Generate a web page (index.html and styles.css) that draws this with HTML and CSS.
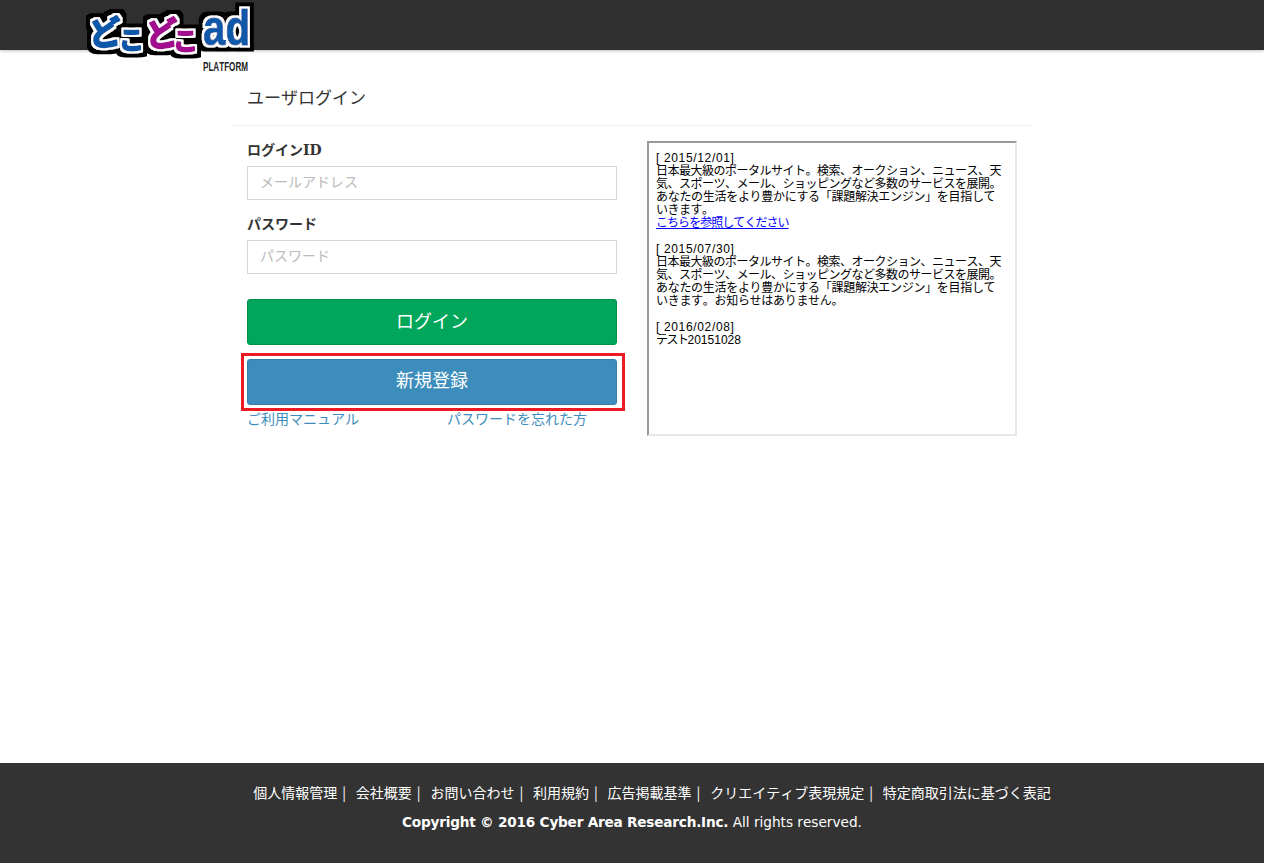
FILE: index.html
```html
<!DOCTYPE html>
<html lang="ja">
<head>
<meta charset="utf-8">
<title>ユーザログイン</title>
<link rel="stylesheet" href="styles.css">
</head>
<body>
<header class="topbar">
  <svg class="logo" width="172" height="74" viewBox="0 0 172 74">
    <defs>
      <filter id="logo-outline" x="-10%" y="-25%" width="120%" height="150%">
        <feMorphology in="SourceAlpha" operator="dilate" radius="2" result="inner"/>
        <feFlood flood-color="#fff"/>
        <feComposite in2="inner" operator="in" result="white"/>
        <feMorphology in="SourceAlpha" operator="dilate" radius="5.5" result="outer"/>
        <feFlood flood-color="#000"/>
        <feComposite in2="outer" operator="in" result="black"/>
        <feMerge>
          <feMergeNode in="black"/>
          <feMergeNode in="white"/>
          <feMergeNode in="SourceGraphic"/>
        </feMerge>
      </filter>
    </defs>
    <g class="logo-mark">
      <text class="kana big blue" x="3" y="45" transform="rotate(-6 20 30)">ど</text>
      <text class="kana small blue" x="34" y="49">こ</text>
      <text class="kana big purple" x="60" y="46" transform="rotate(-6 77 30)">ど</text>
      <text class="kana small purple" x="88" y="50">こ</text>
      <text class="logo-ad" x="118" y="45" textLength="47" lengthAdjust="spacingAndGlyphs">ad</text>
    </g>
    <text class="logo-platform" x="118" y="71" textLength="45" lengthAdjust="spacingAndGlyphs">PLATFORM</text>
  </svg>
</header>
<main class="page">
  <h1 class="title">ユーザログイン</h1>
  <div class="columns">
    <form class="login">
      <label class="field-label">ログインID</label>
      <input class="field" type="text" placeholder="メールアドレス">
      <label class="field-label second">パスワード</label>
      <input class="field" type="password" placeholder="パスワード">
      <button class="btn btn-green" type="button">ログイン</button>
      <div class="register">
        <button class="btn btn-blue" type="button">新規登録</button>
        <span class="highlight"></span>
      </div>
      <div class="links">
        <a href="#" class="link link-manual">ご利用マニュアル</a>
        <a href="#" class="link">パスワードを忘れた方</a>
      </div>
    </form>
    <div class="notices">
      <span class="latin">[ 2015/12/01]</span><br>
      日本最大級のポータルサイト。検索、オークション、ニュース、天<br>
      気、スポーツ、メール、ショッピングなど多数のサービスを展開。<br>
      <span class="wide">あなたの生活をより豊かにする「課題解決エンジン」を目指して</span><br>
      いきます。<br>
      <a href="#" class="notice-link">こちらを参照してください</a><br>
      <br>
      <span class="latin">[ 2015/07/30]</span><br>
      日本最大級のポータルサイト。検索、オークション、ニュース、天<br>
      気、スポーツ、メール、ショッピングなど多数のサービスを展開。<br>
      <span class="wide">あなたの生活をより豊かにする「課題解決エンジン」を目指して</span><br>
      <span class="wide">いきます。お知らせはありません。</span><br>
      <br>
      <span class="latin">[ 2016/02/08]</span><br>
      <span class="narrow">テスト</span><span class="digits">20151028</span>
    </div>
  </div>
</main>
<footer class="footer">
  <nav class="footer-nav">
    <a href="#">個人情報管理</a><span class="sep">|</span>
    <a href="#">会社概要</a><span class="sep">|</span>
    <a href="#">お問い合わせ</a><span class="sep">|</span>
    <a href="#">利用規約</a><span class="sep">|</span>
    <a href="#">広告掲載基準</a><span class="sep">|</span>
    <a href="#">クリエイティブ表現規定</a><span class="sep">|</span>
    <a href="#">特定商取引法に基づく表記</a>
  </nav>
  <p class="copyright"><strong>Copyright © 2016 Cyber Area Research.Inc.</strong> All rights reserved.</p>
</footer>
</body>
</html>
```
FILE: styles.css
```css
* { box-sizing: border-box; }
html, body { height: 100%; }
body {
  margin: 0;
  display: flex;
  flex-direction: column;
  min-height: 863px;
  background: #fff;
  color: #333;
  font-family: "Noto Sans CJK JP", "Liberation Sans", sans-serif;
  font-size: 14px;
  font-kerning: none;
}
.topbar {
  height: 50px;
  flex: none;
  background: #2f2f2f;
  box-shadow: 0 1px 3px rgba(0,0,0,.25);
  padding-left: 85px;
}
.logo { display: block; overflow: visible; }
.logo-mark { filter: url(#logo-outline); }
.kana {
  font-family: "Noto Sans CJK JP", sans-serif;
  font-weight: 700;
  stroke-width: 2px;
  stroke-linejoin: round;
}
.big { font-size: 33px; }
.small { font-size: 25px; }
.blue { fill: #0b58a8; stroke: #0b58a8; }
.purple { fill: #a3118f; stroke: #a3118f; }
.logo-ad {
  font-family: "Liberation Sans", sans-serif;
  font-size: 50px;
  font-weight: 700;
  fill: #0b58a8;
  stroke: #0b58a8;
  stroke-width: 1px;
}
.logo-platform {
  font-family: "Liberation Sans", sans-serif;
  font-size: 13px;
  font-weight: 700;
  fill: #222;
}
.page {
  flex: 1;
  width: 800px;
  margin-left: 232px;
}
.title {
  margin: 0;
  height: 76px;
  padding: 35px 0 0 15px;
  border-bottom: 1px solid #f2f2f2;
  font-size: 17px;
  font-weight: 400;
  line-height: 24px;
  color: #333;
}
.columns {
  display: flex;
  padding: 15px 0 0 15px;
  gap: 30px;
}
.login { width: 370px; display: flex; flex-direction: column; }
.field-label {
  font-family: "DejaVu Serif", "Noto Sans CJK JP", serif;
  font-size: 14px;
  font-weight: 700;
  line-height: 18px;
  height: 25px;
  color: #333;
}
.field-label.second { margin-top: 15px; }
.field {
  height: 34px;
  width: 100%;
  border: 1px solid #d2d6de;
  padding: 0 12px 5px 12px;
  font: inherit;
  font-size: 14px;
  background: #fff;
  outline: none;
}
.field::placeholder { color: #bbb; opacity: 1; }
.btn {
  display: block;
  width: 100%;
  height: 46px;
  border-radius: 3px;
  color: #fff;
  font: inherit;
  font-size: 18px;
  padding: 0 0 5px;
}
.btn-green { margin-top: 25px; background: #00a65a; border: 1px solid #008d4c; }
.register { position: relative; margin-top: 14px; }
.btn-blue { background: #3c8dbc; border: 1px solid #367fa9; padding-bottom: 7px; }
.highlight {
  position: absolute;
  left: -6px;
  top: -6px;
  width: 384px;
  height: 58px;
  border: 3px solid #ed1c24;
  pointer-events: none;
}
.links { display: flex; margin-top: 3px; }
.link { color: #3c8dbc; text-decoration: none; font-size: 14px; line-height: 20px; }
.link-manual { width: 200px; }
.notices {
  width: 370px;
  height: 295px;
  padding: 9px 5px 0 7px;
  border-style: solid;
  border-width: 2px;
  border-color: #9a9a9a #e8e8e8 #e8e8e8 #9a9a9a;
  font-family: "Liberation Sans", "Noto Sans CJK JP", sans-serif;
  font-size: 12px;
  line-height: 13px;
  letter-spacing: -0.5px;
  color: #000;
  overflow: hidden;
}
.latin { letter-spacing: 0.65px; }
.digits { letter-spacing: 0; }
.wide { letter-spacing: -0.3px; }
.narrow { letter-spacing: -1.5px; }
.notice-link { color: #00f; text-decoration: underline; letter-spacing: -0.95px; }
.footer {
  flex: none;
  height: 100px;
  background: #333;
  color: #fff;
  text-align: center;
  padding-top: 19px;
}
.footer-nav { font-size: 14px; line-height: 20px; padding-left: 40px; }
.footer-nav a { color: #fff; text-decoration: none; }
.sep { margin: 0 6.7px 0 5px; }
.copyright {
  margin: 10px 0 0;
  font-family: "DejaVu Sans", sans-serif;
  font-size: 13.65px;
  line-height: 20px;
}
.copyright strong { letter-spacing: -0.22px; }
```
